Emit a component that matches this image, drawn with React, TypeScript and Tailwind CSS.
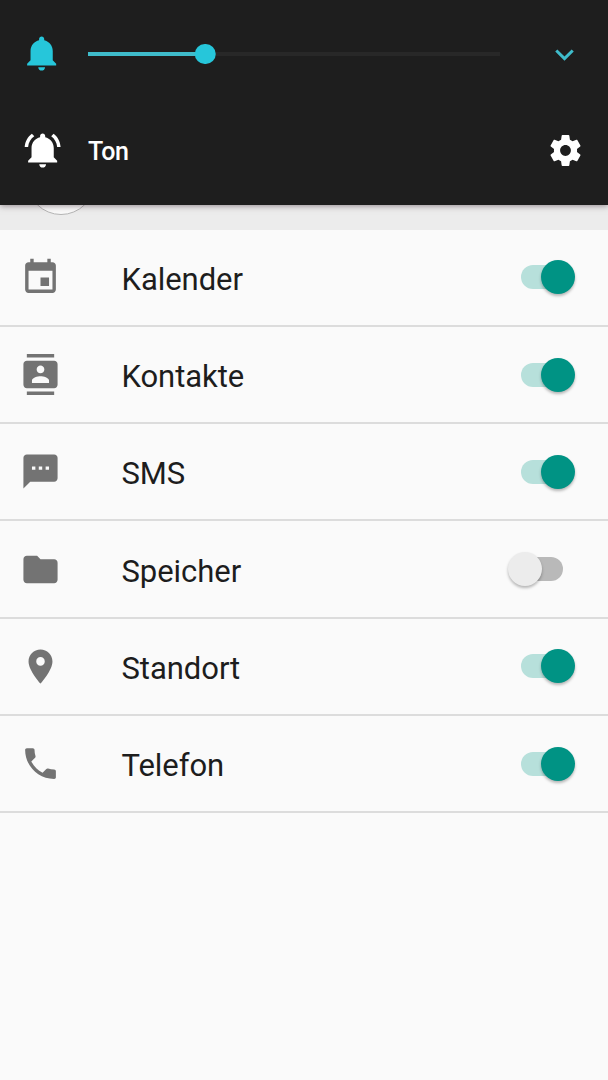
import { useState } from "react"

type Permission = {
    id: string
    label: string
    icon: string
    enabled: boolean
}

const BELL = "M11.5 22c1.1 0 2-.9 2-2h-4c0 1.1.9 2 2 2zM18 16v-5.5c0-3.1-2.1-5.6-5-6.3v-.7c0-.8-.7-1.5-1.5-1.5S10 2.7 10 3.5v.7c-2.9.7-5 3.2-5 6.3V16l-2 2v1h17v-1l-2-2z"
const BELL_WAVES = "M6.6 3.6L5.2 2.2C2.8 4 1.2 6.8 1 10h2c.2-2.7 1.5-5 3.6-6.4zM20 10h2c-.2-3.2-1.7-6-4.1-7.8l-1.4 1.4c2 1.4 3.3 3.7 3.5 6.4z"
const GEAR = "M19.43 12.98c.04-.32.07-.64.07-.98s-.03-.66-.07-.98l2.11-1.65c.19-.15.24-.42.12-.64l-2-3.46c-.12-.22-.39-.3-.61-.22l-2.49 1c-.52-.4-1.08-.73-1.69-.98l-.38-2.65C14.46 2.18 14.25 2 14 2h-4c-.25 0-.46.18-.49.42l-.38 2.65c-.61.25-1.17.59-1.69.98l-2.49-1c-.23-.09-.49 0-.61.22l-2 3.46c-.13.22-.07.49.12.64l2.11 1.65c-.04.32-.07.65-.07.98s.03.66.07.98l-2.11 1.65c-.19.15-.24.42-.12.64l2 3.46c.12.22.39.3.61.22l2.49-1c.52.4 1.08.73 1.69.98l.38 2.65c.03.24.24.42.49.42h4c.25 0 .46-.18.49-.42l.38-2.65c.61-.25 1.17-.59 1.69-.98l2.49 1c.23.09.49 0 .61-.22l2-3.46c.12-.22.07-.49-.12-.64l-2.11-1.65zM12 15.5c-1.93 0-3.5-1.57-3.5-3.5s1.57-3.5 3.5-3.5 3.5 1.57 3.5 3.5-1.57 3.5-3.5 3.5z"

const initialPermissions: Permission[] = [
    {
        id: "calendar",
        label: "Kalender",
        icon: "M17 12h-5v5h5v-5zM16 1v2H8V1H6v2H5c-1.11 0-1.99.9-1.99 2L3 19c0 1.1.89 2 2 2h14c1.1 0 2-.9 2-2V5c0-1.1-.9-2-2-2h-1V1h-2zm3 18H5V8h14v11z",
        enabled: true,
    },
    {
        id: "contacts",
        label: "Kontakte",
        icon: "M20 0H4v2h16V0zM4 24h16v-2H4v2zM20 4H4c-1.1 0-2 .9-2 2v12c0 1.1.9 2 2 2h16c1.1 0 2-.9 2-2V6c0-1.1-.9-2-2-2zm-8 2.75c1.24 0 2.25 1.01 2.25 2.25s-1.01 2.25-2.25 2.25S9.75 10.24 9.75 9 10.76 6.75 12 6.75zM17 17H7v-1.5c0-1.67 3.33-2.5 5-2.5s5 .83 5 2.5V17z",
        enabled: true,
    },
    {
        id: "sms",
        label: "SMS",
        icon: "M20 2H4c-1.1 0-1.99.9-1.99 2L2 22l4-4h14c1.1 0 2-.9 2-2V4c0-1.1-.9-2-2-2zM9 11H7V9h2v2zm4 0h-2V9h2v2zm4 0h-2V9h2v2z",
        enabled: true,
    },
    {
        id: "storage",
        label: "Speicher",
        icon: "M10 4H4c-1.1 0-1.99.9-1.99 2L2 18c0 1.1.9 2 2 2h16c1.1 0 2-.9 2-2V8c0-1.1-.9-2-2-2h-8l-2-2z",
        enabled: false,
    },
    {
        id: "location",
        label: "Standort",
        icon: "M12 2C8.13 2 5 5.13 5 9c0 5.25 7 13 7 13s7-7.75 7-13c0-3.87-3.13-7-7-7zm0 9.5c-1.38 0-2.5-1.12-2.5-2.5s1.12-2.5 2.5-2.5 2.5 1.12 2.5 2.5-1.12 2.5-2.5 2.5z",
        enabled: true,
    },
    {
        id: "phone",
        label: "Telefon",
        icon: "M6.62 10.79c1.44 2.83 3.76 5.14 6.59 6.59l2.2-2.2c.27-.27.67-.36 1.02-.24 1.12.37 2.33.57 3.57.57.55 0 1 .45 1 1V20c0 .55-.45 1-1 1-9.39 0-17-7.61-17-17 0-.55.45-1 1-1h3.5c.55 0 1 .45 1 1 0 1.25.2 2.45.57 3.57.11.35.03.74-.25 1.02l-2.2 2.2z",
        enabled: true,
    },
]

const Icon = ({ d, className }: { d: string, className: string }) => (
    <svg viewBox="0 0 24 24" fill="currentColor" className={`shrink-0 ${className}`}>
        <path d={d} />
    </svg>
)

const Switch = ({ label, checked, onChange }: { label: string, checked: boolean, onChange: () => void }) => (
    <button
        role="switch"
        aria-checked={checked}
        aria-label={label}
        onClick={onChange}
        className="relative flex h-[34px] w-[67px] shrink-0 items-center px-[12.5px]"
    >
        <span className={`h-6 w-full rounded-full ${checked ? "bg-[#b7e0db]" : "bg-[#b9b9b9]"}`} />
        <span
            className={`absolute top-0 size-[34px] rounded-full shadow-[0_2px_3px_rgba(0,0,0,0.28)] ${checked ? "right-0 bg-[#009384]" : "left-0 bg-[#ececec]"}`}
        />
    </button>
)

const VolumePanel = () => {
    const volume = 28.5

    return (
        <div className="relative z-10 h-[205px] bg-[#1e1e1e] shadow-[0_1px_6px_rgba(60,40,50,0.5)]">
            <div className="flex h-[108px] items-center pl-[22px] pr-[34px] text-[#26c6da]">
                <Icon d={BELL} className="mb-px size-[41px]" />
                <div className="relative ml-[25px] flex h-5 w-[412px] items-center">
                    <div className="h-1 w-full bg-[#282828]">
                        <div className="h-full bg-[#3fbccb]" style={{ width: `${volume}%` }} />
                    </div>
                    <div
                        className="absolute size-[20.5px] -translate-x-1/2 rounded-full bg-[#26c6da]"
                        style={{ left: `${volume}%` }}
                    />
                </div>
                <svg viewBox="0 0 19 12" fill="none" stroke="#3fbccb" strokeWidth="3" className="ml-auto mt-[2px] h-3 w-[19px]">
                    <path d="M1.3 1.5l8.2 8.1 8.2-8.1" />
                </svg>
            </div>

            <div className="flex h-[86px] items-center pl-[22.5px] pr-[24px] text-white">
                <Icon d={BELL + BELL_WAVES} className="mb-[2px] size-[41px]" />
                <span className="ml-[24.5px] pt-[2px] text-[25px] leading-8 font-medium tracking-[-0.3px]">Ton</span>
                <Icon d={GEAR} className="mb-px ml-auto size-[37px]" />
            </div>
        </div>
    )
}

export default function App() {
    const [permissions, setPermissions] = useState<Permission[]>(initialPermissions)

    const toggle = (id: string) => {
        setPermissions(permissions.map((p) => p.id === id ? { ...p, enabled: !p.enabled } : p))
    }

    return (
        <div className="h-[1080px] w-[608px] overflow-hidden bg-[#fafafa] font-[Roboto,sans-serif] text-[#1d1d1d]">
            <VolumePanel />

            {/* App header, mostly covered by the volume panel */}
            <div className="flex h-[24.6px] items-end bg-[#ececec] pb-[14.6px] pl-[27px]">
                <div className="size-[68px] shrink-0 rounded-full border-[1.5px] border-[#b5b5b5] bg-[#fafafa]" />
            </div>

            <ul>
                {permissions.map((p) => (
                    <li key={p.id} className="flex h-[97.3px] items-center border-b-2 border-[#dcdcdc] pl-5 pr-[33px]">
                        <Icon d={p.icon} className="size-[41px] text-[#737373]" />
                        <span className="ml-[60.5px] flex-1 pt-[5px] text-[31px] leading-10 tracking-[-0.05px]">{p.label}</span>
                        <Switch label={p.label} checked={p.enabled} onChange={() => toggle(p.id)} />
                    </li>
                ))}
            </ul>
        </div>
    )
}
